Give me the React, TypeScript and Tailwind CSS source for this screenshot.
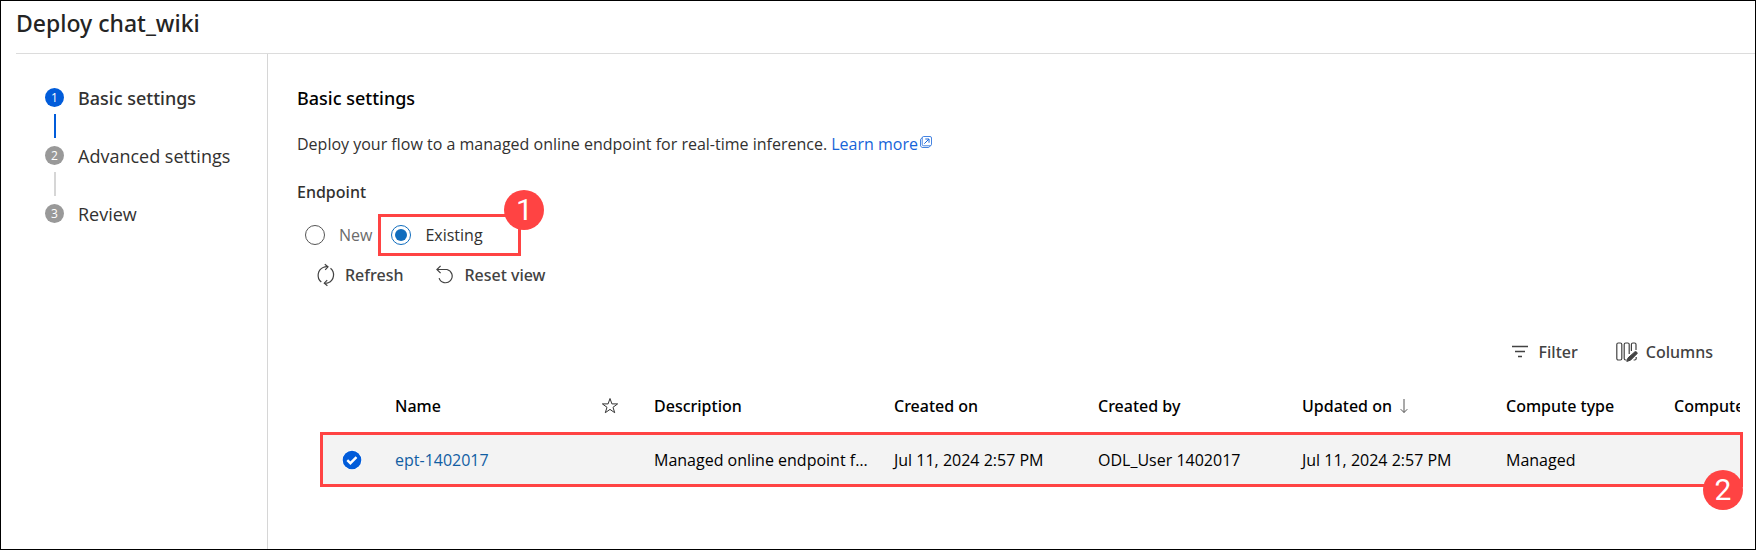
import React, { useState } from "react";

type Step = { label: string; active: boolean };

const steps: Step[] = [
  { label: "Basic settings", active: true },
  { label: "Advanced settings", active: false },
  { label: "Review", active: false },
];

function Badge({ value, className }: { value: number; className: string }) {
  return (
    <span
      className={`absolute flex size-10 items-center justify-center rounded-full bg-[#ff4343] font-['Roboto',sans-serif] text-3xl text-white ${className}`}
    >
      {value}
    </span>
  );
}

function ExternalIcon() {
  return (
    <svg viewBox="0 0 12 12" className="mb-2 ml-0.5 inline size-3" fill="none" stroke="currentColor" aria-hidden="true">
      <rect x="2.2" y="0.5" width="9.3" height="9.3" rx="1.5" strokeWidth="0.8" />
      <path d="M2 2.2C1 2.4.5 3 .5 4v5c0 1.600.9 2.500 2.500 2.500h5c1 0 1.700-.5 1.900-1.500" strokeWidth="0.8" />
      <path d="M4.300 7.700 8.700 3.300M5.300 3h3.700v3.700" strokeWidth="1" />
    </svg>
  );
}

function RefreshIcon() {
  return (
    <svg viewBox="0 0 20 24" className="h-6 w-5 shrink-0" fill="none" stroke="currentColor" strokeWidth="1.2" aria-hidden="true">
      <path d="M5.300 19A8.600 8.600 0 0 1 7.600 4.300Q9.500 3.400 12 3.700" />
      <path d="M8.800 1.200 12 3.800 9.200 6.800" />
      <path d="M14.500 5.200A8.600 8.600 0 0 1 12.300 19.700Q10.600 20.400 8.400 20.200" />
      <path d="M11.400 22.800 8.300 20.200 11.200 17.200" />
    </svg>
  );
}

function ResetIcon() {
  return (
    <svg viewBox="0 0 20 20" className="size-5 shrink-0" fill="none" stroke="currentColor" strokeWidth="1.200" aria-hidden="true">
      <path d="M2 4.500h10a6.700 6.700 0 1 1-7.900 8.600" />
      <path d="M5.600 .8 1.900 4.500l3.700 3.700" />
    </svg>
  );
}

function FilterIcon() {
  return (
    <svg viewBox="0 0 18 16" className="h-4 w-[18px] shrink-0" fill="none" stroke="currentColor" strokeWidth="1.400" aria-hidden="true">
      <path d="M1 2.500h16M4 7.500h10M7 12.500h4" />
    </svg>
  );
}

function ColumnsIcon() {
  return (
    <svg viewBox="0 0 22 20" className="h-5 w-[22px] shrink-0" fill="none" stroke="currentColor" strokeWidth="1.200" aria-hidden="true">
      <rect x="0.800" y="1" width="5" height="17" rx="1.500" />
      <path d="M13.200 12V2.500C13.200 1.600 12.500 1 11.700 1H9.700C8.900 1 8.200 1.600 8.200 2.500v14c0 .9.600 1.500 1.500 1.500h1" />
      <path d="M15.400 9V2.500c0-.9.600-1.500 1.500-1.500h1.600c.9 0 1.500.6 1.500 1.500V8M20.200 15v1.500c0 .9-.7 1.500-1.600 1.500h-1" />
      <path d="M19 9.700q2.200-.4 2.200 1.800L14.500 18.200 10.800 19.400 12 15.900Z" fill="currentColor" strokeWidth="1" />
    </svg>
  );
}

function StarIcon() {
  return (
    <svg viewBox="0 0 18 18" className="size-[18px]" fill="none" stroke="#333" strokeWidth="1" aria-label="Favorite">
      <path d="m9 1.500 1.900 5.400h5.700L12 10.300l1.700 5.400L9 12.400l-4.700 3.300L6 10.300 1.400 6.900h5.700Z" />
    </svg>
  );
}

function CheckCircle() {
  return (
    <svg viewBox="0 0 20 20" className="block size-5" aria-hidden="true">
      <circle cx="10" cy="10" r="10" fill="#fff" />
      <circle cx="10" cy="10" r="9.300" fill="#015cda" />
      <path d="m5.300 10.200 3.100 3L14.500 7.200" fill="none" stroke="#fff" strokeWidth="2.400" />
    </svg>
  );
}

function Radio({ label, checked, onSelect }: { label: string; checked: boolean; onSelect: () => void }) {
  return (
    <label className={`flex items-center gap-[14px] ${checked ? "text-[#323130]" : "text-[#6b6b6b]"}`}>
      <input
        type="radio"
        name="endpoint"
        checked={checked}
        onChange={onSelect}
        className="size-5 shrink-0 appearance-none rounded-full border border-[#555] bg-white bg-clip-content p-[3px] checked:border-[#0f6cbd] checked:bg-[#0f6cbd]"
      />
      {label}
    </label>
  );
}

export default function App() {
  const [endpoint, setEndpoint] = useState("existing");
  const [selected, setSelected] = useState(true);
  const head = "h-[53px] p-0 text-left font-['Noto_Sans',sans-serif] font-medium whitespace-nowrap";
  const cell = "p-0 whitespace-nowrap";

  return (
    <div className="flex min-h-screen flex-col border border-black bg-white font-['Open_Sans','Noto_Sans',sans-serif] text-base leading-6 text-[#323130]">
      <header className="ml-[15px] flex h-[53px] items-center border-b border-[#dcdcdc] pb-2">
        <h1 className="font-['Noto_Sans',sans-serif] text-[23px] leading-8 font-medium text-[#242424]">Deploy chat_wiki</h1>
      </header>

      <div className="flex flex-1">
        <nav aria-label="Steps" className="w-[267px] shrink-0 border-r border-[#d6d6d6] pt-8 pl-11">
          <ol>
            {steps.map((step, i) => (
              <li key={step.label} className="flex h-[58px] gap-[14px]">
                <div className="flex w-[19px] flex-col items-center pt-0.5">
                  <span
                    className={`flex size-[19px] items-center justify-center rounded-full text-xs leading-3 text-white ${step.active ? "bg-[#015cda]" : "bg-[#999]"}`}
                  >
                    {i + 1}
                  </span>
                  {i < steps.length - 1 && (
                    <span className={`mt-[7px] h-6 w-0.5 ${step.active ? "bg-[#015cda]" : "bg-[#d6d6d6]"}`} />
                  )}
                </div>
                <a
                  href="#"
                  aria-current={step.active ? "step" : undefined}
                  className={`text-lg leading-6 ${step.active ? "font-['Noto_Sans',sans-serif] font-medium" : ""}`}
                >
                  {step.label}
                </a>
              </li>
            ))}
          </ol>
        </nav>

        <main className="min-w-0 flex-1 pt-8 pl-[29px]">
          <h2 className="font-['Noto_Sans',sans-serif] text-lg leading-6 font-medium text-black">Basic settings</h2>
          <p className="mt-[22px]">
            Deploy your flow to a managed online endpoint for real-time inference.{" "}
            <a href="#" className="text-[#1664d9]">
              Learn more
              <ExternalIcon />
            </a>
          </p>

          <fieldset className="mt-6">
            <legend className="font-['Noto_Sans',sans-serif] font-medium">Endpoint</legend>
            <div className="mt-[10px] flex h-[42px] items-center pl-2">
              <Radio label="New" checked={endpoint === "new"} onSelect={() => setEndpoint("new")} />
              <div className="relative ml-[6px] flex h-[42px] w-[143px] items-center border-3 border-[#ff4343] pl-[10px]">
                <Radio label="Existing" checked={endpoint === "existing"} onSelect={() => setEndpoint("existing")} />
                <Badge value={1} className="-top-[27px] -right-[26px]" />
              </div>
            </div>
          </fieldset>

          <div className="mt-[7px] flex gap-8 pl-[19px] font-['Noto_Sans',sans-serif] font-medium text-[#424242]">
            <button type="button" className="flex items-center gap-[9px]">
              <RefreshIcon />
              Refresh
            </button>
            <button type="button" className="flex items-center gap-[9px]">
              <ResetIcon />
              Reset view
            </button>
          </div>

          <div className="mt-[53px] flex justify-end gap-[38px] pr-[42px] font-['Noto_Sans',sans-serif] font-medium text-[#424242]">
            <button type="button" className="flex items-center gap-[10px]">
              <FilterIcon />
              Filter
            </button>
            <button type="button" className="flex items-center gap-2">
              <ColumnsIcon />
              Columns
            </button>
          </div>

          <div className="relative mt-[15px] mr-3 ml-[23px] text-black">
            <table className="w-full table-fixed border-collapse">
              <colgroup>
                <col className="w-[75px]" />
                <col className="w-[206px]" />
                <col className="w-[53px]" />
                <col className="w-[240px]" />
                <col className="w-[204px]" />
                <col className="w-[204px]" />
                <col className="w-[204px]" />
                <col className="w-[168px]" />
                <col />
              </colgroup>
              <thead>
                <tr>
                  <th className={head} aria-label="Selection" />
                  <th className={head}>Name</th>
                  <th className={head}>
                    <StarIcon />
                  </th>
                  <th className={head}>Description</th>
                  <th className={head}>Created on</th>
                  <th className={head}>Created by</th>
                  <th className={head}>
                    <span className="flex items-center gap-2">
                      Updated on
                      <svg viewBox="0 0 8 16" className="h-4 w-2" fill="none" stroke="#555" aria-hidden="true">
                        <path d="M4 1v13.500M.7 11.200 4 14.500l3.300-3.300" />
                      </svg>
                    </span>
                  </th>
                  <th className={head}>Compute type</th>
                  <th className={head}>
                    <div className="mr-[3px] overflow-hidden">Compute</div>
                  </th>
                </tr>
              </thead>
              <tbody>
                <tr className="h-[55px] bg-[#f3f3f3]">
                  <td className={cell}>
                    <label className="relative ml-[22px] block size-5 cursor-pointer">
                      <input
                        type="checkbox"
                        aria-label="Select ept-1402017"
                        checked={selected}
                        onChange={() => setSelected(!selected)}
                        className="peer sr-only"
                      />
                      <span className="hidden peer-checked:block">
                        <CheckCircle />
                      </span>
                    </label>
                  </td>
                  <td className={cell}>
                    <a href="#" className="text-[#115ea3]">
                      ept-1402017
                    </a>
                  </td>
                  <td className={cell} />
                  <td className={cell}>
                    <div className="mr-5 truncate">Managed online endpoint for chat_wiki</div>
                  </td>
                  <td className={cell}>Jul 11, 2024 2:57 PM</td>
                  <td className={cell}>ODL_User 1402017</td>
                  <td className={cell}>Jul 11, 2024 2:57 PM</td>
                  <td className={cell}>Managed</td>
                  <td className={cell} />
                </tr>
              </tbody>
            </table>
            <div className="pointer-events-none absolute inset-x-0 bottom-0 h-[55px] border-3 border-[#ff4343]">
              <Badge value={2} className="-right-[3px] -bottom-[26px]" />
            </div>
          </div>
        </main>
      </div>
    </div>
  );
}
